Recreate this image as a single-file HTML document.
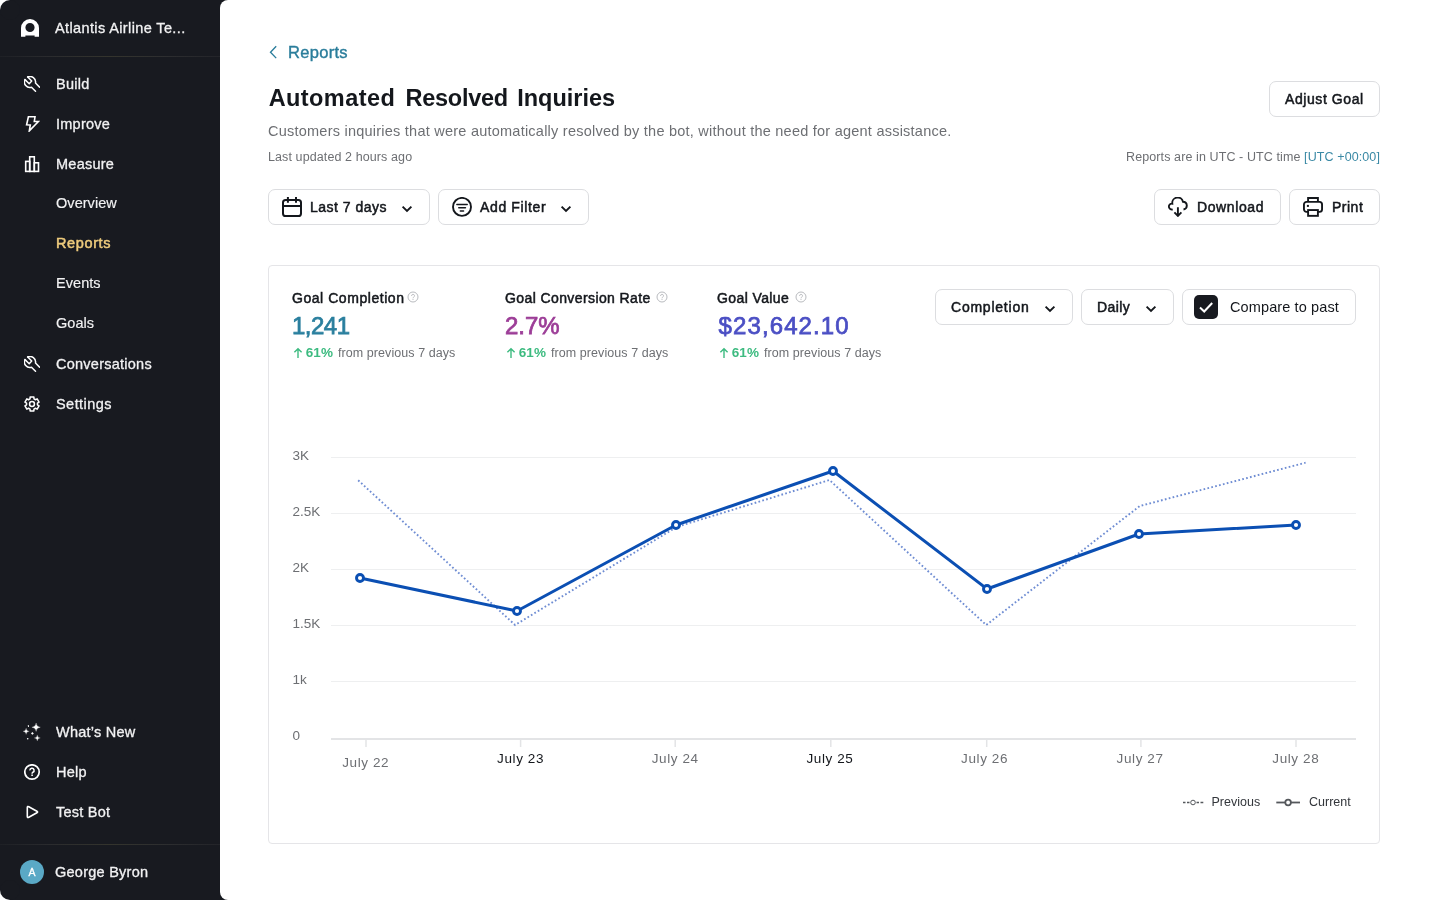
<!DOCTYPE html>
<html>
<head>
<meta charset="utf-8">
<title>Automated Resolved Inquiries</title>
<style>
*{box-sizing:border-box;margin:0;padding:0}
html,body{width:1440px;height:900px;overflow:hidden}
body{background:#181a20;font-family:"Liberation Sans",sans-serif;position:relative;color:#14171c}
.abs{position:absolute;white-space:nowrap}
#side{will-change:transform;position:absolute;left:0;top:0;width:220px;height:900px;background:#181a20;color:#f2f2f3}
#main{will-change:transform;position:absolute;left:220px;top:0;width:1220px;height:900px;background:#fff;border-radius:8px 0 0 8px}
.corner{position:absolute;width:10px;height:10px;background:#fff}
.corner i{position:absolute;width:20px;height:20px;border-radius:10px;background:#181a20}
.nav{position:absolute;left:56px;font-size:14.5px;line-height:20px;color:#f2f2f3;white-space:nowrap;letter-spacing:.25px;-webkit-text-stroke:.3px #f2f2f3}
.sub{-webkit-text-stroke:.15px #f2f2f3;letter-spacing:.05px}
.hr{position:absolute;left:0;width:220px;height:1px;background:linear-gradient(90deg,#1e2025 0%,#2a2b2e 22%,#34342d 50%,#2d2e30 75%,#232429 100%)}
.ico{position:absolute}
.btn{position:absolute;height:36px;border:1px solid #dcdde0;border-radius:7px;background:#fff}
.bt{position:absolute;font-size:14px;line-height:20px;color:#14171c;white-space:nowrap;top:7px;-webkit-text-stroke:.5px #14171c;letter-spacing:.4px}
.lab{font-size:14px;line-height:20px;color:#14171c;-webkit-text-stroke:.5px #14171c;letter-spacing:.4px}
.val{font-size:24px;line-height:32px;-webkit-text-stroke:.75px currentColor}
.pct{font-size:13.5px;line-height:18px;font-weight:700;color:#3dbb80;letter-spacing:.1px}
.frm{font-size:12.5px;line-height:18px;color:#6d6f73;letter-spacing:.07px}
</style>
</head>
<body>
<div id="side">
  <div class="corner" style="left:0;top:0"><i style="left:0;top:0"></i></div>
  <div class="corner" style="left:0;top:890px"><i style="left:0;top:-10px"></i></div>

  <!-- logo -->
  <svg class="ico" style="left:21px;top:19px" width="18" height="18" viewBox="0 0 18 18"><path fill="#fff" fill-rule="evenodd" d="M0 9a9 9 0 0 1 18 0v8.7h-4.4v-1.3H4.4v1.3H0z M9 3.9a4.6 4.6 0 1 0 0 9.2a4.6 4.6 0 0 0 0-9.2z"/></svg>
  <div class="nav" style="left:55px;top:18px;letter-spacing:.38px">Atlantis Airline Te...</div>
  <div class="hr" style="top:56px"></div>


  <svg class="ico" style="left:24px;top:76px" width="16" height="16" viewBox="0 0 16 16"><g fill="none" stroke="#fff" stroke-width="1.5" stroke-linecap="round" stroke-linejoin="round"><path d="M3.7 1 L7.7 5 L5.2 7.7 L1 3.6"/><path d="M3.7 1 A5.5 5.5 0 0 1 11.5 6.9 L15.6 11.2"/><path d="M1 3.6 A5.5 5.5 0 0 0 7.5 11.3 L11.5 15.2"/></g></svg>
  <svg class="ico" style="left:24px;top:116px" width="16" height="16" viewBox="0 0 16 16"><path fill="none" stroke="#fff" stroke-width="1.6" stroke-linejoin="miter" d="M4.4 0.8 L11 0.8 L10.3 5.4 L14.4 5.5 L5.3 14.9 L6.3 8.9 L2.6 8.8 Z"/></svg>
  <svg class="ico" style="left:24px;top:156px" width="16" height="17" viewBox="0 0 16 17"><g fill="none" stroke="#fff" stroke-width="1.6"><rect x="1.7" y="5.4" width="4" height="10"/><rect x="5.7" y="0.8" width="4.6" height="14.6"/><rect x="10.3" y="6.8" width="4.2" height="8.6"/></g></svg>
  <svg class="ico" style="left:24px;top:356px" width="16" height="16" viewBox="0 0 16 16"><g fill="none" stroke="#fff" stroke-width="1.5" stroke-linecap="round" stroke-linejoin="round"><path d="M3.7 1 L7.7 5 L5.2 7.7 L1 3.6"/><path d="M3.7 1 A5.5 5.5 0 0 1 11.5 6.9 L15.6 11.2"/><path d="M1 3.6 A5.5 5.5 0 0 0 7.5 11.3 L11.5 15.2"/></g></svg>
  <svg class="ico" style="left:24px;top:396px" width="17" height="17" viewBox="0 0 17 17"><g fill="none" stroke="#fff" stroke-width="1.5" stroke-linejoin="round"><path d="M6.11 0.95 L9.89 0.95 L9.97 2.87 L11.46 3.73 L13.16 2.84 L15.05 6.11 L13.43 7.14 L13.43 8.86 L15.05 9.89 L13.16 13.16 L11.46 12.27 L9.97 13.13 L9.89 15.05 L6.11 15.05 L6.03 13.13 L4.54 12.27 L2.84 13.16 L0.95 9.89 L2.57 8.86 L2.57 7.14 L0.95 6.11 L2.84 2.84 L4.54 3.73 L6.03 2.87Z"/><circle cx="8" cy="8" r="2.45"/></g></svg>
  <svg class="ico" style="left:22px;top:722px" width="20" height="20" viewBox="-2 -2 20 20"><g fill="#fff"><path d="M12.1 -1 Q12.4 2.9 16.3 3.2 Q12.4 3.5 12.1 7.4 Q11.8 3.5 7.9 3.2 Q11.8 2.9 12.1 -1Z" stroke="#fff" stroke-width=".25"/><path d="M2.1 4.2 Q2.3 7.1 5.2 7.3 Q2.3 7.5 2.1 10.4 Q1.9 7.5 -1 7.3 Q1.9 7.1 2.1 4.2Z" stroke="#fff" stroke-width=".2"/><path d="M13.3 10.9 Q13.5 13.7 16.3 13.9 Q13.5 14.1 13.3 16.9 Q13.1 14.1 10.3 13.9 Q13.1 13.7 13.3 10.9Z" stroke="#fff" stroke-width=".2"/><rect x="3.9" y="1" width="1.1" height="2" rx=".4"/><path d="M8.4 8 L9.8 9.4 L8.4 10.8 L7 9.4Z"/><circle cx="3.7" cy="14.7" r=".8"/></g></svg>
  <svg class="ico" style="left:24px;top:764px" width="17" height="17" viewBox="0 0 17 17"><circle cx="8" cy="8" r="7.2" fill="none" stroke="#fff" stroke-width="1.7"/><path fill="none" stroke="#fff" stroke-width="1.5" d="M5.9 6.4 A2.1 2.1 0 1 1 8.9 8.2 Q8.1 8.7 8.1 9.7"/><rect x="7.3" y="10.5" width="1.6" height="1.5" fill="#fff"/></svg>
  <svg class="ico" style="left:24px;top:804px" width="16" height="16" viewBox="0 0 16 16"><path fill="none" stroke="#fff" stroke-width="1.6" stroke-linejoin="round" d="M3.3 3.6 Q3.3 1.9 4.8 2.7 L12.9 7.2 Q14.3 8 12.9 8.8 L4.8 13.3 Q3.3 14.1 3.3 12.4Z"/></svg>
  <div class="nav" style="top:74px">Build</div>
  <div class="nav" style="top:114px">Improve</div>
  <div class="nav" style="top:154px">Measure</div>
  <div class="nav sub" style="top:193px">Overview</div>
  <div class="nav" style="top:233px;color:#eecb7c;-webkit-text-stroke:.5px #eecb7c;letter-spacing:.62px">Reports</div>
  <div class="nav sub" style="top:273px">Events</div>
  <div class="nav sub" style="top:313px">Goals</div>
  <div class="nav" style="top:354px">Conversations</div>
  <div class="nav" style="top:394px;letter-spacing:.45px">Settings</div>

  <div class="nav" style="top:722px">What’s New</div>
  <div class="nav" style="top:762px">Help</div>
  <div class="nav" style="top:802px">Test Bot</div>
  <div class="hr" style="top:844px"></div>
  <div class="abs" style="left:20px;top:860px;width:24px;height:24px;border-radius:12px;background:#5aa9c6"></div>
  <div class="abs" style="left:20px;top:860px;width:24px;line-height:24px;text-align:center;font-size:10.5px;color:#fff;-webkit-text-stroke:.3px #fff">A</div>
  <div class="nav" style="left:55px;top:862px">George Byron</div>
</div>

<div id="main">
  <!-- header (coords relative to #main: subtract 220) -->
  <svg class="ico" style="left:49px;top:45px" width="10" height="14" viewBox="0 0 10 14"><path fill="none" stroke="#2a7d9b" stroke-width="1.35" d="M7.2 1.3 L1.5 7.2 L7.2 13.1"/></svg>
  <div class="abs" id="crumb" style="left:68px;top:41px;font-size:16.5px;line-height:22px;color:#2a7d9b;letter-spacing:.3px;-webkit-text-stroke:.4px #2a7d9b">Reports</div>
  <div class="abs" id="title" style="left:48.7px;top:83px;font-size:23.5px;line-height:30px;font-weight:700;color:#14171c"><span style="letter-spacing:.42px">Automated</span><span style="letter-spacing:-.27px;margin-left:10.3px">Resolved</span><span style="letter-spacing:0px;margin-left:9.4px">Inquiries</span></div>
  <div class="abs" id="subt" style="left:48px;top:121px;font-size:14.5px;line-height:20px;color:#6d6f73;letter-spacing:.235px">Customers inquiries that were automatically resolved by the bot, without the need for agent assistance.</div>
  <div class="abs" id="upd" style="left:48px;top:148px;font-size:12.5px;line-height:18px;color:#6d6f73;letter-spacing:.1px">Last updated 2 hours ago</div>
  <div class="abs" id="utc" style="right:60px;top:148px;font-size:12.5px;line-height:18px;color:#6d6f73;letter-spacing:.1px">Reports are in UTC - UTC time <span style="color:#3a89a5">[UTC +00:00]</span></div>

  <div class="btn" style="left:1049px;top:81px;width:111px"><div class="bt" id="adj" style="letter-spacing:0.58px;left:15px">Adjust Goal</div></div>

  <div class="btn" style="left:48px;top:189px;width:162px">
    <svg class="ico" style="left:13px;top:7px" width="20" height="20" viewBox="0 0 20 20"><g fill="none" stroke="#14171c" stroke-width="2"><rect x="1" y="2.9" width="18" height="16.1" rx="2.6"/><path d="M1 8.9 H19 M5.9 0 V5.8 M14 0 V5.8"/></g></svg>
    <div class="bt" id="l7" style="letter-spacing:0.5px;left:41px">Last 7 days</div><svg class="ico" style="left:132px;top:15px" width="12" height="8" viewBox="0 0 12 8"><path fill="none" stroke="#14171c" stroke-width="1.9" stroke-linejoin="miter" d="M1.6 1.6 L6 6 L10.4 1.6"/></svg>
  </div>
  <div class="btn" style="left:218px;top:189px;width:151px">
    <svg class="ico" style="left:13px;top:7px" width="20" height="20" viewBox="0 0 20 20"><circle cx="10" cy="9.9" r="9" fill="none" stroke="#14171c" stroke-width="1.9"/><g stroke="#14171c" stroke-linecap="round"><path stroke-width="1.3" d="M4.8 7.5 H15.3"/><path stroke-width="1.6" d="M6.8 10.8 H13.4"/><path stroke-width="1.4" d="M8.3 14 H11.6"/></g></svg>
    <div class="bt" id="af" style="letter-spacing:0.63px;left:41px">Add Filter</div><svg class="ico" style="left:121px;top:15px" width="12" height="8" viewBox="0 0 12 8"><path fill="none" stroke="#14171c" stroke-width="1.9" stroke-linejoin="miter" d="M1.6 1.6 L6 6 L10.4 1.6"/></svg>
  </div>
  <div class="btn" style="left:934px;top:189px;width:127px">
    <svg class="ico" style="left:13px;top:7px" width="20" height="20" viewBox="0 0 20 20"><g fill="none" stroke="#14171c" stroke-width="1.9"><path d="M4.7 12.3 A2.9 2.9 0 1 1 4.3 6.7 A5.45 5.45 0 0 1 15 4.7 A3.9 3.9 0 0 1 15.5 12.45" stroke-linecap="butt"/><path d="M9.9 10.2 V18.4 M6.4 15.4 L9.9 18.9 L13.4 15.4"/></g></svg>
    <div class="bt" id="dl" style="letter-spacing:0.6px;left:42px">Download</div>
  </div>
  <div class="btn" style="left:1069px;top:189px;width:91px">
    <svg class="ico" style="left:13px;top:7px" width="20" height="20" viewBox="0 0 20 20"><g fill="none" stroke="#14171c" stroke-width="1.9"><path d="M5.1 14.9 H3.5 A2.55 2.55 0 0 1 0.95 12.35 V7.45 A2.55 2.55 0 0 1 3.5 4.9 H16.5 A2.55 2.55 0 0 1 19.05 7.45 V12.35 A2.55 2.55 0 0 1 16.5 14.9 H14.9"/><path d="M5.1 4.9 V0.95 H14.9 V4.9"/><rect x="5.1" y="13.05" width="9.8" height="5.8"/></g><rect x="3.9" y="7.9" width="2" height="2" fill="#14171c"/></svg>
    <div class="bt" id="pr" style="letter-spacing:0.5px;left:42px">Print</div>
  </div>


  <svg class="ico" id="chart" style="left:0;top:0" width="1220" height="900" viewBox="220 0 1220 900">
    <style>.ax{font-family:"Liberation Sans",sans-serif;font-size:13.5px;fill:#6d6f73}.lg{font-family:"Liberation Sans",sans-serif;font-size:12.5px;fill:#33363b}</style>
    <path d="M331 457.5 H1356" stroke="#eeeff0" stroke-width="1"/><path d="M331 513.5 H1356" stroke="#eeeff0" stroke-width="1"/><path d="M331 569.5 H1356" stroke="#eeeff0" stroke-width="1"/><path d="M331 625.5 H1356" stroke="#eeeff0" stroke-width="1"/><path d="M331 681.5 H1356" stroke="#eeeff0" stroke-width="1"/>
    <path d="M331 739 H1356" stroke="#e3e4e6" stroke-width="2"/>
    <path d="M366 739 V747" stroke="#e3e4e6" stroke-width="1.5"/><path d="M520.6 739 V747" stroke="#e3e4e6" stroke-width="1.5"/><path d="M675.2 739 V747" stroke="#e3e4e6" stroke-width="1.5"/><path d="M830.8 739 V747" stroke="#e3e4e6" stroke-width="1.5"/><path d="M986.7 739 V747" stroke="#e3e4e6" stroke-width="1.5"/><path d="M1140.9 739 V747" stroke="#e3e4e6" stroke-width="1.5"/><path d="M1296 739 V747" stroke="#e3e4e6" stroke-width="1.5"/>
    <text x="292.6" y="459.6" class="ax">3K</text><text x="292.6" y="515.6" class="ax">2.5K</text><text x="292.6" y="571.6" class="ax">2K</text><text x="292.6" y="627.6" class="ax">1.5K</text><text x="292.6" y="683.6" class="ax">1k</text><text x="292.6" y="739.6" class="ax">0</text>
    <text x="365.7" y="767.3" class="ax xl" letter-spacing=".6" style="fill:#6d6f73" text-anchor="middle">July 22</text><text x="520.6" y="762.9" class="ax xl" letter-spacing=".6" style="fill:#14171c" text-anchor="middle">July 23</text><text x="675.2" y="762.9" class="ax xl" letter-spacing=".6" style="fill:#6d6f73" text-anchor="middle">July 24</text><text x="830" y="762.9" class="ax xl" letter-spacing=".6" style="fill:#14171c" text-anchor="middle">July 25</text><text x="984.6" y="762.9" class="ax xl" letter-spacing=".6" style="fill:#6d6f73" text-anchor="middle">July 26</text><text x="1140.1" y="762.9" class="ax xl" letter-spacing=".6" style="fill:#6d6f73" text-anchor="middle">July 27</text><text x="1295.8" y="762.9" class="ax xl" letter-spacing=".6" style="fill:#6d6f73" text-anchor="middle">July 28</text>
    <polyline points="358.2,480.3 515.1,625 676.5,527 829.5,480 986.2,625 1139.8,506 1305.6,462.7" fill="none" stroke="#6f8dd3" stroke-width="1.9" stroke-dasharray="1.7 2.3"/>
    <polyline points="360,578 517,611 676,525 833,471 987,589 1139,534 1296,525" fill="none" stroke="#0b4fb3" stroke-width="3" stroke-linejoin="round"/>
    <circle cx="360" cy="578" r="3.5" fill="#fff" stroke="#0b4fb3" stroke-width="2.9"/><circle cx="517" cy="611" r="3.5" fill="#fff" stroke="#0b4fb3" stroke-width="2.9"/><circle cx="676" cy="525" r="3.5" fill="#fff" stroke="#0b4fb3" stroke-width="2.9"/><circle cx="833" cy="471" r="3.5" fill="#fff" stroke="#0b4fb3" stroke-width="2.9"/><circle cx="987" cy="589" r="3.5" fill="#fff" stroke="#0b4fb3" stroke-width="2.9"/><circle cx="1139" cy="534" r="3.5" fill="#fff" stroke="#0b4fb3" stroke-width="2.9"/><circle cx="1296" cy="525" r="3.5" fill="#fff" stroke="#0b4fb3" stroke-width="2.9"/>
    <g stroke="#55585c" fill="none">
      <path d="M1183 802.5 H1185.5 M1187 802.5 H1189.5 M1196.5 802.5 H1199 M1200.5 802.5 H1203.3" stroke-width="1.5"/>
      <circle cx="1193" cy="802.5" r="2.3" stroke-width="1" fill="#fff"/>
      <path d="M1276.3 802.5 H1300" stroke-width="1.8"/>
      <circle cx="1288.1" cy="802.5" r="2.8" stroke-width="1.8" fill="#fff"/>
    </g>
    <text x="1211.5" y="806" class="lg" id="lgp">Previous</text>
    <text x="1309" y="806" class="lg" id="lgc">Current</text>
  </svg>
  <!-- card -->
  <div class="abs" style="left:48px;top:265px;width:1112px;height:579px;border:1px solid #e5e5e8;border-radius:4px"></div>

  <div class="abs lab" id="s1l" style="letter-spacing:0.55px;left:72px;top:287.5px">Goal Completion</div><svg class="ico" style="left:187px;top:291px" width="12" height="12" viewBox="0 0 12 12"><circle cx="6" cy="6" r="5" fill="none" stroke="#b9bbbf" stroke-width="1"/><path fill="none" stroke="#b9bbbf" stroke-width="1" d="M4.6 4.9 A1.45 1.45 0 1 1 6.7 6.1 Q6 6.5 6 7.2"/><rect x="5.5" y="7.9" width="1" height="1" fill="#b9bbbf"/></svg>
  <div class="abs val" id="s1v" style="left:72px;top:310px;color:#2a7f9e;letter-spacing:-.5px">1,241</div>
  <svg class="ico" style="left:73px;top:347px" width="10" height="12" viewBox="0 0 10 12"><path fill="none" stroke="#3dbb80" stroke-width="1.4" d="M5 11 V1.9 M1.4 5.3 L5 1.7 L8.6 5.3"/></svg><div class="abs pct" id="s1p" style="left:85.7px;top:344px">61%</div><div class="abs frm" id="s1f" style="left:118px;top:344px">from previous 7 days</div>

  <div class="abs lab" id="s2l" style="left:285px;top:287.5px">Goal Conversion Rate</div><svg class="ico" style="left:436px;top:291px" width="12" height="12" viewBox="0 0 12 12"><circle cx="6" cy="6" r="5" fill="none" stroke="#b9bbbf" stroke-width="1"/><path fill="none" stroke="#b9bbbf" stroke-width="1" d="M4.6 4.9 A1.45 1.45 0 1 1 6.7 6.1 Q6 6.5 6 7.2"/><rect x="5.5" y="7.9" width="1" height="1" fill="#b9bbbf"/></svg>
  <div class="abs val" id="s2v" style="left:285px;top:310px;color:#9c3d97">2.7%</div>
  <svg class="ico" style="left:286px;top:347px" width="10" height="12" viewBox="0 0 10 12"><path fill="none" stroke="#3dbb80" stroke-width="1.4" d="M5 11 V1.9 M1.4 5.3 L5 1.7 L8.6 5.3"/></svg><div class="abs pct" style="left:298.7px;top:344px">61%</div><div class="abs frm" style="left:331px;top:344px">from previous 7 days</div>

  <div class="abs lab" id="s3l" style="left:497px;top:287.5px">Goal Value</div><svg class="ico" style="left:575px;top:291px" width="12" height="12" viewBox="0 0 12 12"><circle cx="6" cy="6" r="5" fill="none" stroke="#b9bbbf" stroke-width="1"/><path fill="none" stroke="#b9bbbf" stroke-width="1" d="M4.6 4.9 A1.45 1.45 0 1 1 6.7 6.1 Q6 6.5 6 7.2"/><rect x="5.5" y="7.9" width="1" height="1" fill="#b9bbbf"/></svg>
  <div class="abs val" id="s3v" style="left:498.6px;top:310px;color:#4b4fc4;letter-spacing:1.1px">$23,642.10</div>
  <svg class="ico" style="left:499px;top:347px" width="10" height="12" viewBox="0 0 10 12"><path fill="none" stroke="#3dbb80" stroke-width="1.4" d="M5 11 V1.9 M1.4 5.3 L5 1.7 L8.6 5.3"/></svg><div class="abs pct" style="left:511.7px;top:344px">61%</div><div class="abs frm" style="left:544px;top:344px">from previous 7 days</div>

  <div class="btn" style="left:715px;top:289px;width:138px"><div class="bt" id="cmp" style="letter-spacing:0.77px;left:15px">Completion</div><svg class="ico" style="left:108px;top:15px" width="12" height="8" viewBox="0 0 12 8"><path fill="none" stroke="#14171c" stroke-width="1.9" stroke-linejoin="miter" d="M1.6 1.6 L6 6 L10.4 1.6"/></svg></div>
  <div class="btn" style="left:861px;top:289px;width:93px"><div class="bt" id="dly" style="left:15px">Daily</div><svg class="ico" style="left:63px;top:15px" width="12" height="8" viewBox="0 0 12 8"><path fill="none" stroke="#14171c" stroke-width="1.9" stroke-linejoin="miter" d="M1.6 1.6 L6 6 L10.4 1.6"/></svg></div>
  <div class="btn" style="left:962px;top:289px;width:174px">
    <div class="abs" style="left:11px;top:5px;width:24px;height:24px;border-radius:5px;background:#181a20"></div>
    <svg class="ico" style="left:11px;top:5px" width="24" height="24" viewBox="0 0 24 24"><path fill="none" stroke="#fff" stroke-width="2" d="M6 12.5 L10.2 16.5 L18.2 8"/></svg>
    <div class="abs" id="ctp" style="left:47px;top:7px;font-size:14.5px;line-height:20px;color:#14171c;letter-spacing:.12px">Compare to past</div>
  </div>
</div>
</body>
</html>
